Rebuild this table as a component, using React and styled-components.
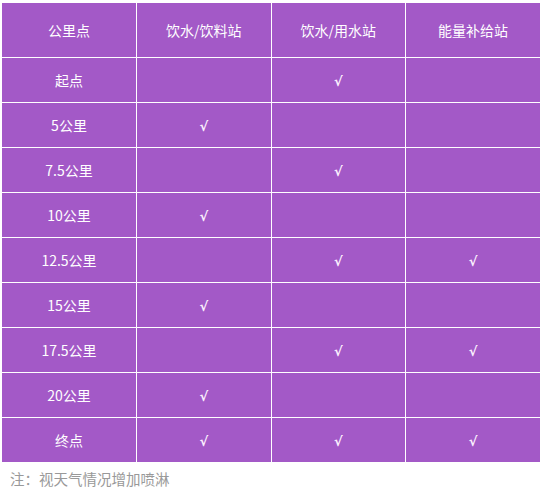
import React from "react";
import styled, { createGlobalStyle } from "styled-components";

const Global = createGlobalStyle`
  html, body { margin: 0; padding: 0; background: #fff; }
  body { font-family: "Noto Sans CJK SC", "Noto Sans", sans-serif; }
`;

const Page = styled.div`
  padding: 3px 0 0 2px;
`;

const Table = styled.table`
  width: 538px;
  border-collapse: collapse;
  border-style: hidden;
  background: #a359c7;
  table-layout: fixed;
`;

const HeadCell = styled.th`
  height: 54px;
  border: 1px solid #fff;
  color: #fff;
  font-size: 14px;
  font-weight: 400;
  text-align: center;
  vertical-align: middle;
  padding: 0;
`;

const Cell = styled.td`
  height: 44px;
  border: 1px solid #fff;
  color: #fff;
  font-size: 14px;
  text-align: center;
  vertical-align: middle;
  padding: 0;
`;

const Check = styled.span`
  font-family: "DejaVu Sans", "Liberation Sans", sans-serif;
  font-weight: 700;
  font-size: 13px;
  color: #fbeefe;
`;

const Note = styled.p`
  margin: 7px 0 0 8px;
  font-size: 14.5px;
  color: #999;
  line-height: 20px;
`;

const headers = ["公里点", "饮水/饮料站", "饮水/用水站", "能量补给站"];
const rows = [
  ["起点", 0, 1, 0],
  ["5公里", 1, 0, 0],
  ["7.5公里", 0, 1, 0],
  ["10公里", 1, 0, 0],
  ["12.5公里", 0, 1, 1],
  ["15公里", 1, 0, 0],
  ["17.5公里", 0, 1, 1],
  ["20公里", 1, 0, 0],
  ["终点", 1, 1, 1],
];

export default function App() {
  return (
    <Page>
      <Global />
      <Table>
        <thead>
          <tr>
            {headers.map((h) => (
              <HeadCell key={h}>{h}</HeadCell>
            ))}
          </tr>
        </thead>
        <tbody>
          {rows.map(([name, ...marks]) => (
            <tr key={name}>
              <Cell>{name}</Cell>
              {marks.map((m, i) => (
                <Cell key={i}>{m ? <Check>√</Check> : null}</Cell>
              ))}
            </tr>
          ))}
        </tbody>
      </Table>
      <Note>注：视天气情况增加喷淋</Note>
    </Page>
  );
}
